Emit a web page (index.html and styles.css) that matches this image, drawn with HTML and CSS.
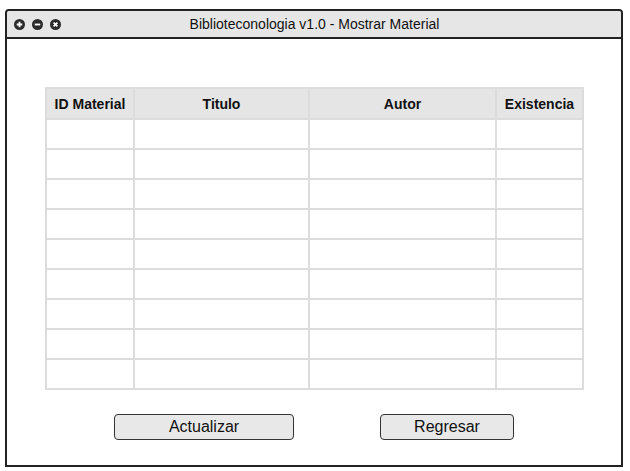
FILE: index.html
```html
<!DOCTYPE html>
<html lang="es">
<head>
<meta charset="utf-8">
<title>Biblioteconologia v1.0 - Mostrar Material</title>
<link rel="stylesheet" href="styles.css">
</head>
<body>
<div class="window">
  <div class="titlebar">
    <div class="controls">
      <svg class="ctl" viewBox="0 0 12 12"><circle cx="6" cy="6" r="6" fill="#2b2b2b"/><path d="M6 3v6M3 6h6" stroke="#fff" stroke-width="2"/></svg>
      <svg class="ctl" viewBox="0 0 12 12"><circle cx="6" cy="6" r="6" fill="#2b2b2b"/><path d="M3 6h6" stroke="#fff" stroke-width="2"/></svg>
      <svg class="ctl" viewBox="0 0 12 12"><circle cx="6" cy="6" r="6" fill="#2b2b2b"/><path d="M3.9 3.9l4.2 4.2M8.1 3.9l-4.2 4.2" stroke="#fff" stroke-width="1.8"/></svg>
    </div>
    <div class="title">Biblioteconologia v1.0 - Mostrar Material</div>
  </div>
  <div class="content">
    <table class="grid">
      <thead>
        <tr><th class="c1">ID Material</th><th class="c2">Titulo</th><th class="c3">Autor</th><th class="c4">Existencia</th></tr>
      </thead>
      <tbody>
        <tr><td></td><td></td><td></td><td></td></tr>
        <tr><td></td><td></td><td></td><td></td></tr>
        <tr><td></td><td></td><td></td><td></td></tr>
        <tr><td></td><td></td><td></td><td></td></tr>
        <tr><td></td><td></td><td></td><td></td></tr>
        <tr><td></td><td></td><td></td><td></td></tr>
        <tr><td></td><td></td><td></td><td></td></tr>
        <tr><td></td><td></td><td></td><td></td></tr>
        <tr><td></td><td></td><td></td><td></td></tr>
      </tbody>
    </table>
    <div class="actions">
      <button class="btn btn-update">Actualizar</button>
      <button class="btn btn-back">Regresar</button>
    </div>
  </div>
</div>
</body>
</html>
```
FILE: styles.css
```css
* { box-sizing: border-box; }
html, body { margin: 0; padding: 0; background: #fff; }
body { font-family: "Liberation Sans", Arial, sans-serif; color: #111; }

.window {
  margin: 9px 0 0 5px;
  width: 618px;
  height: 458px;
  border: 2px solid #222;
  border-radius: 4px 4px 0 0;
  display: flex;
  flex-direction: column;
}

.titlebar {
  height: 28px;
  background: #e6e6e6;
  border-bottom: 2px solid #222;
  border-radius: 3px 3px 0 0;
  display: flex;
  align-items: center;
  position: relative;
}

.controls {
  display: flex;
  gap: 7px;
  padding-left: 7px;
  padding-top: 1px;
}
.ctl { width: 11px; height: 11px; display: block; }

.title {
  position: absolute;
  left: 0; right: 0; top: 0; bottom: 0;
  display: flex;
  align-items: center;
  justify-content: center;
  font-size: 14px;
  padding-left: 1px;
  padding-bottom: 1px;
}

.content {
  padding: 48px 0 0 38px;
}

.grid {
  border-collapse: separate;
  border-spacing: 0;
  border-top: 2px solid #dcdcdc;
  border-left: 2px solid #dcdcdc;
  width: 539px;
}
.grid th, .grid td {
  border-right: 2px solid #dcdcdc;
  border-bottom: 2px solid #dcdcdc;
  padding: 0;
}
.grid th {
  background: #e5e5e5;
  height: 31px;
  font-size: 14px;
  font-weight: bold;
  text-align: center;
}
.grid td { height: 30px; }
.c1 { width: 88px; }
.c2 { width: 175px; }
.c3 { width: 187px; }
.c4 { width: 87px; }

.actions {
  display: flex;
  padding: 24px 0 0 69px;
}
.btn {
  height: 26px;
  font-family: "Liberation Sans", Arial, sans-serif;
  font-size: 16px;
  color: #111;
  background: #e8e8e8;
  border: 1px solid #333;
  border-radius: 4px;
  padding: 0;
}
.btn-update { width: 180px; }
.btn-back { width: 134px; margin-left: 86px; }
```
